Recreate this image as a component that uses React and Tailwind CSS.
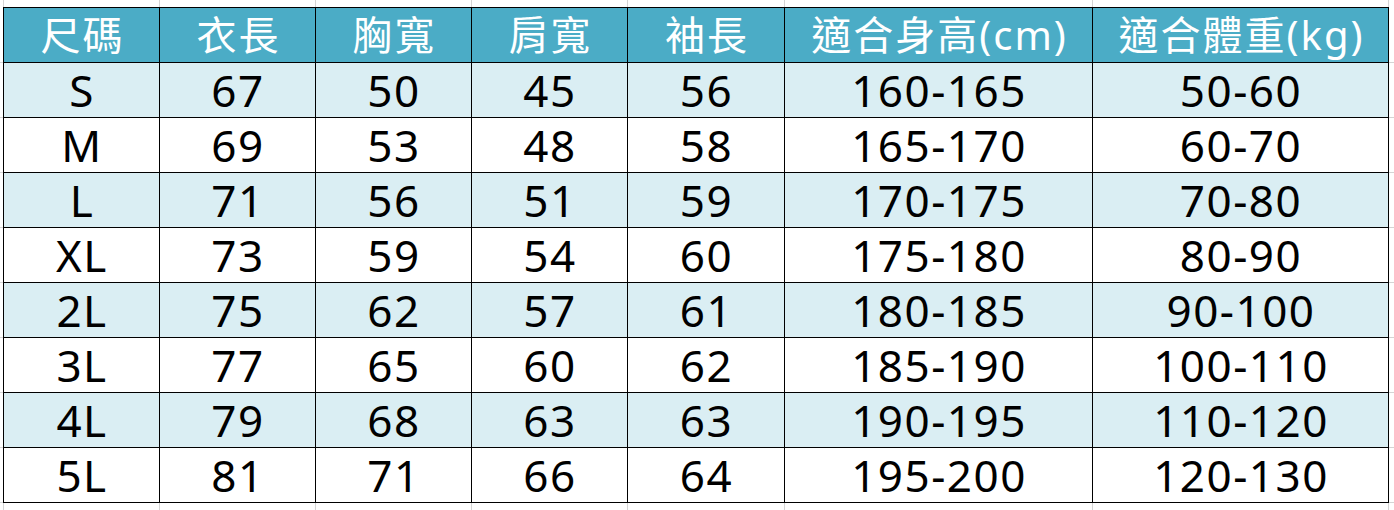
import React from 'react';

const headers = ['尺碼', '衣長', '胸寬', '肩寬', '袖長', '適合身高(cm)', '適合體重(kg)'];

const rows = [
  ['S', '67', '50', '45', '56', '160-165', '50-60'],
  ['M', '69', '53', '48', '58', '165-170', '60-70'],
  ['L', '71', '56', '51', '59', '170-175', '70-80'],
  ['XL', '73', '59', '54', '60', '175-180', '80-90'],
  ['2L', '75', '62', '57', '61', '180-185', '90-100'],
  ['3L', '77', '65', '60', '62', '185-190', '100-110'],
  ['4L', '79', '68', '63', '63', '190-195', '110-120'],
  ['5L', '81', '71', '66', '64', '195-200', '120-130'],
];

const colW = ['w-[156px]', 'w-[156px]', 'w-[156px]', 'w-[156px]', 'w-[157px]', 'w-[308px]', 'w-[296px]'];

const font = { fontFamily: '"Noto Sans", "Noto Sans CJK TC", sans-serif' };

// gray spreadsheet gridlines running past the table edges
const GridStrip = () => (
  <div className="flex h-[7px]">
    <div className="w-[4px] shrink-0 border-r border-[#d4d4d4]" />
    {colW.map((w, i) => (
      <div key={i} className={`${w} shrink-0 border-r border-[#d4d4d4]`} />
    ))}
  </div>
);

const SideStrip = ({ className }) => (
  <div className={`flex flex-col pt-[1px] ${className}`}>
    {Array.from({ length: 9 }).map((_, i) => (
      <div key={i} className="h-[55px] border-b border-[#d4d4d4]" />
    ))}
  </div>
);

export default function App() {
  return (
    <div className="w-[1394px] h-[510px] bg-white overflow-hidden" style={font}>
      <GridStrip />
      <div className="flex">
        <SideStrip className="w-[3px] shrink-0" />
        <div className="shrink-0 border-l border-t border-black">
          <div className="flex bg-[#4bacc6]">
            {headers.map((h, i) => (
              <div
                key={h}
                className={`${colW[i]} h-[55px] flex items-center justify-center pl-[2px] border-r border-b border-black text-white text-[40px] tracking-[2px] leading-none`}
              >
                {h}
              </div>
            ))}
          </div>
          {rows.map((r, ri) => (
            <div key={r[0]} className={`flex ${ri % 2 === 0 ? 'bg-[#daeef3]' : 'bg-white'}`}>
              {r.map((c, i) => (
                <div
                  key={i}
                  className={`${colW[i]} h-[55px] flex items-center justify-center pl-[1px] border-r border-b border-black text-black text-[44px] tracking-[1.5px] leading-none`}
                >
                  {c}
                </div>
              ))}
            </div>
          ))}
        </div>
        <SideStrip className="flex-1" />
      </div>
      <GridStrip />
    </div>
  );
}
